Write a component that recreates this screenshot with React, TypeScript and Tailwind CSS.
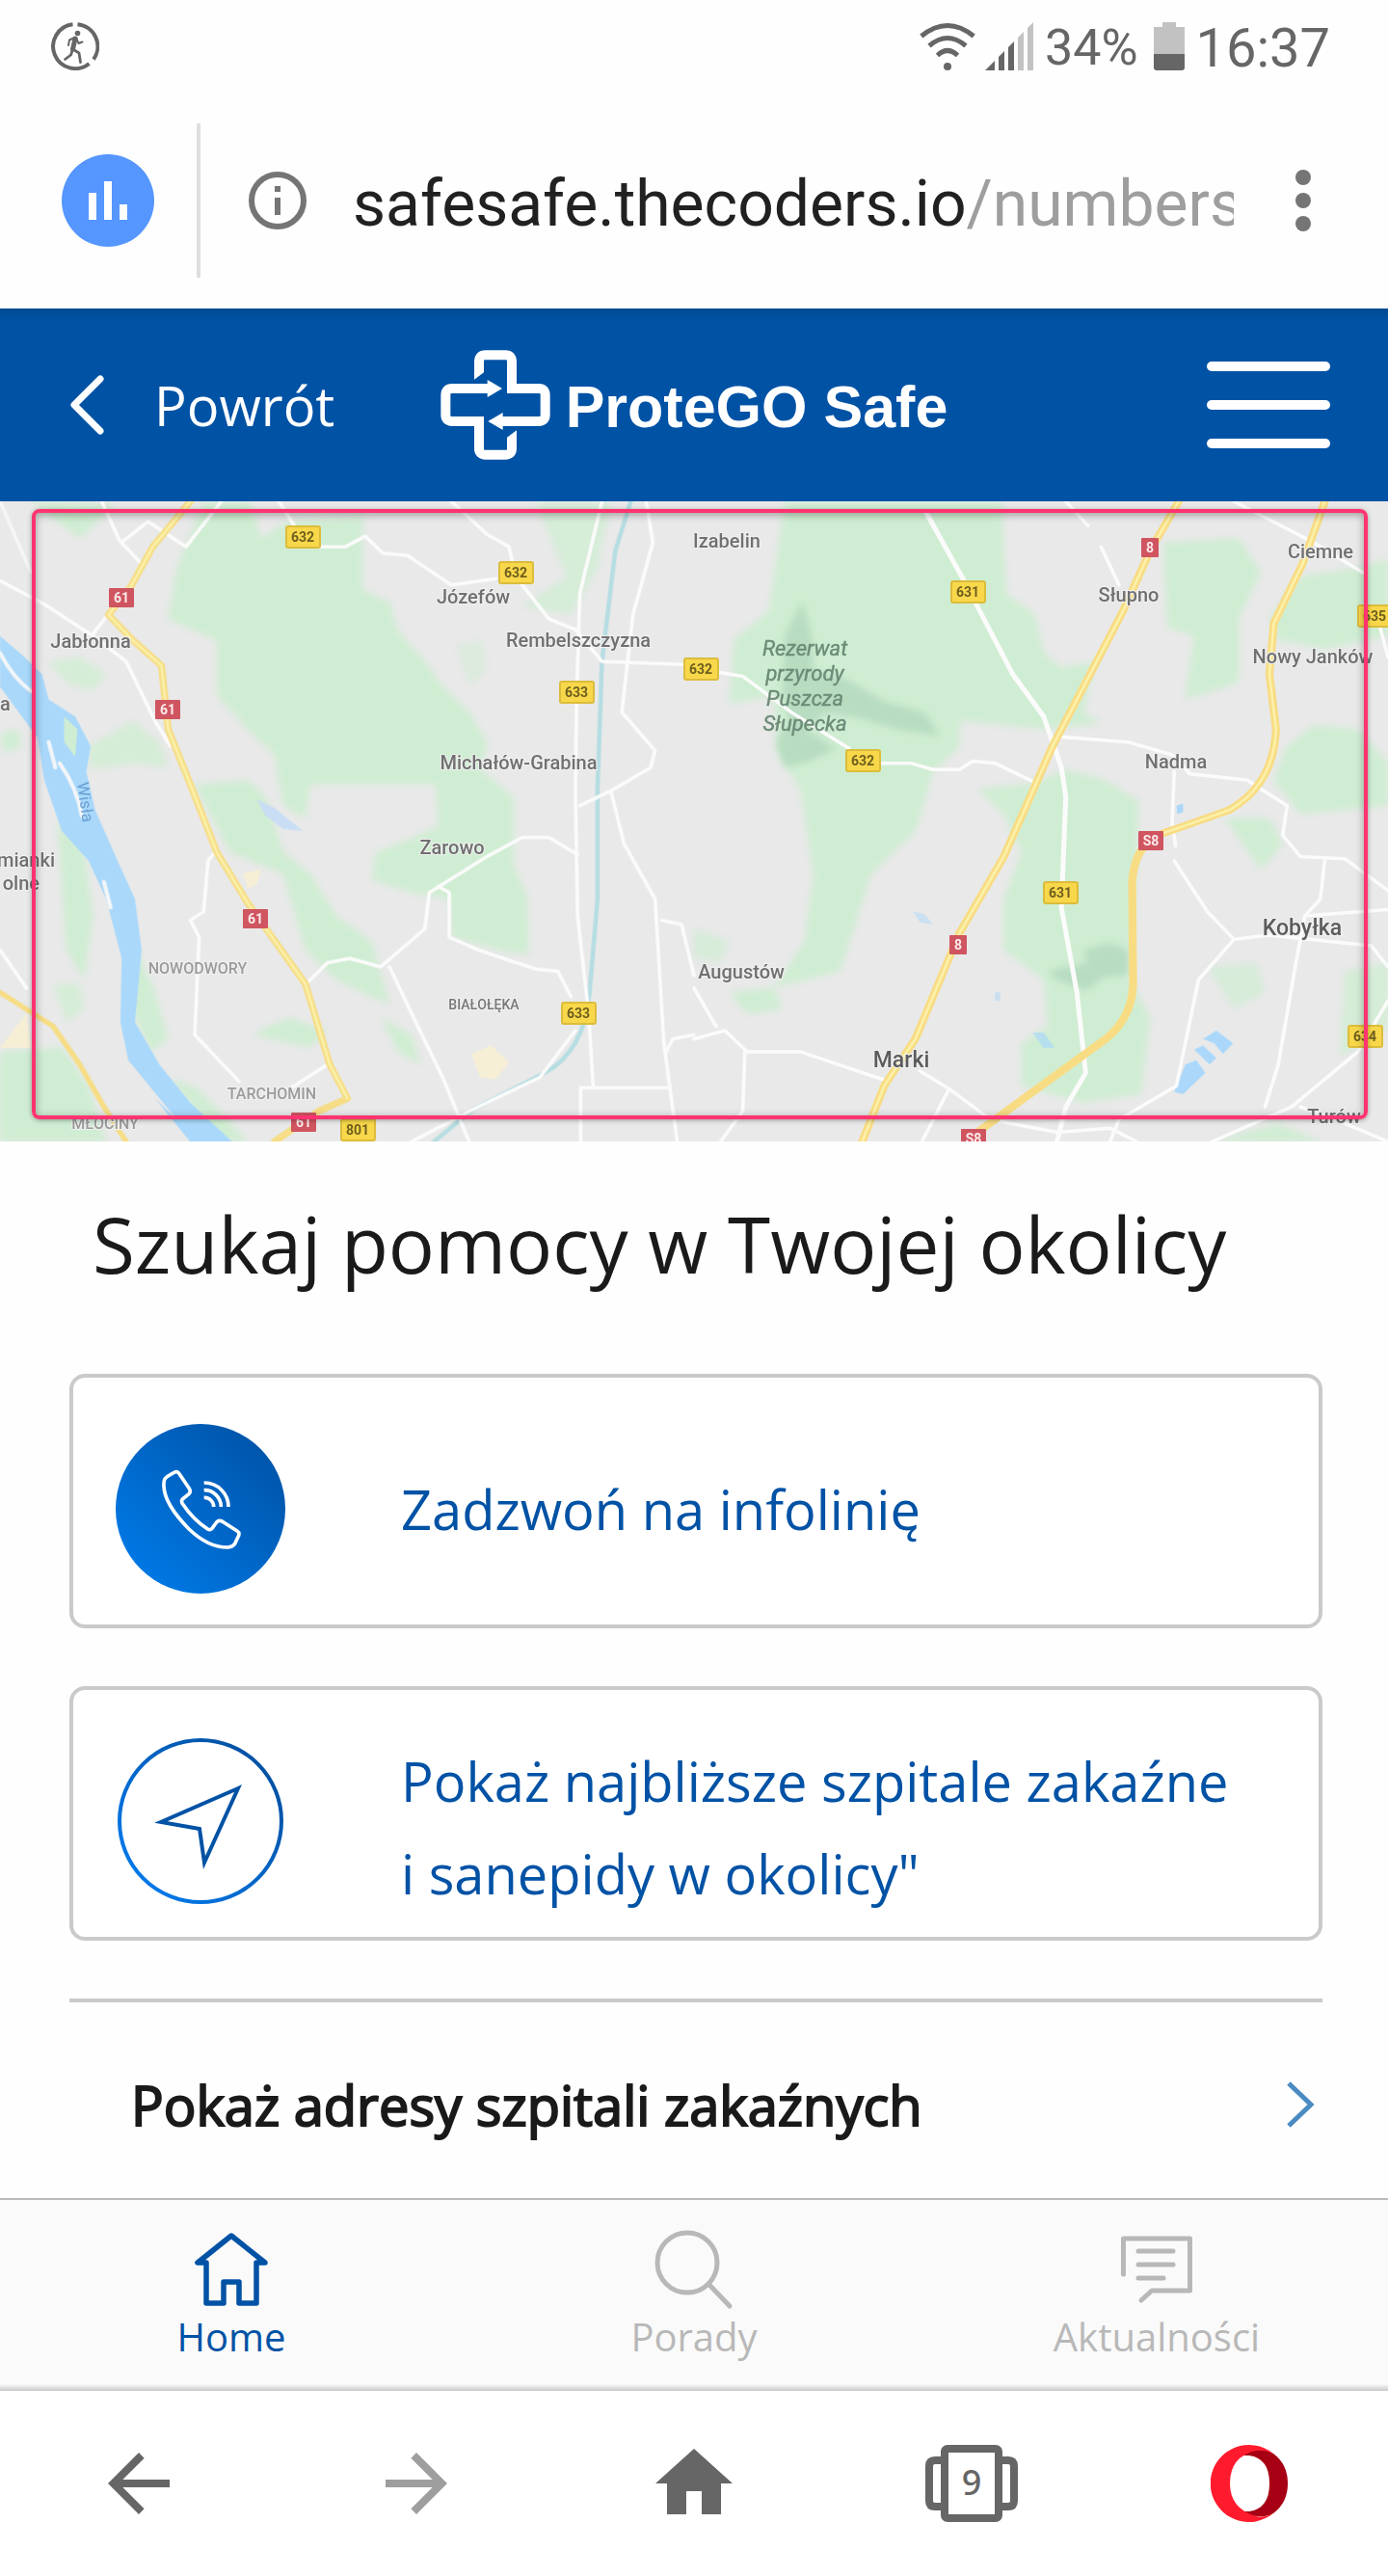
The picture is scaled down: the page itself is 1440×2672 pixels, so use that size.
import type { ReactNode } from "react";

type Point = { text: string; x: number; y: number; size?: number; tone?: string; anchor?: "start" | "middle" | "end" };

const TOWN = "#707070";
const DISTRICT = "#9b9b9b";
const RESERVE = "#6d8c78";

const labels: Point[] = [
  { text: "a", x: 0, y: 217, anchor: "start" },
  { text: "Jabłonna", x: 94, y: 152 },
  { text: "Józefów", x: 491, y: 106 },
  { text: "Rembelszczyzna", x: 600, y: 151 },
  { text: "Michałów-Grabina", x: 538, y: 278 },
  { text: "Zarowo", x: 469, y: 366 },
  { text: "mianki", x: 57, y: 379, anchor: "end" },
  { text: "olne", x: 41, y: 403, anchor: "end" },
  { text: "NOWODWORY", x: 205, y: 490, size: 16, tone: DISTRICT },
  { text: "BIAŁOŁĘKA", x: 502, y: 527, size: 14, tone: "#777777" },
  { text: "TARCHOMIN", x: 282, y: 620, size: 16, tone: DISTRICT },
  { text: "MŁOCINY", x: 109, y: 651, size: 16, tone: DISTRICT },
  { text: "Izabelin", x: 754, y: 48 },
  { text: "Słupno", x: 1171, y: 104 },
  { text: "Ciemne", x: 1370, y: 59 },
  { text: "Nowy Janków", x: 1362, y: 168 },
  { text: "Nadma", x: 1220, y: 277 },
  { text: "Augustów", x: 769, y: 495 },
  { text: "Kobyłka", x: 1351, y: 450, size: 23, tone: "#5c5c5c" },
  { text: "Marki", x: 935, y: 587, size: 23, tone: "#5c5c5c" },
  { text: "Turów", x: 1384, y: 645 },
];

const reserve = [
  { text: "Rezerwat", y: 160 },
  { text: "przyrody", y: 186 },
  { text: "Puszcza", y: 212 },
  { text: "Słupecka", y: 238 },
];

const regionalRoads: [string, number, number][] = [
  ["632", 314, 37],
  ["632", 535, 74],
  ["633", 598, 198],
  ["633", 600, 531],
  ["801", 371, 652],
  ["632", 727, 174],
  ["631", 1004, 94],
  ["632", 895, 269],
  ["631", 1100, 406],
  ["635", 1426, 119],
  ["634", 1416, 555],
];

const nationalRoads: [string, number, number, number][] = [
  ["61", 126, 100, 26],
  ["61", 174, 216, 26],
  ["61", 265, 433, 26],
  ["61", 315, 644, 26],
  ["8", 1193, 48, 18],
  ["8", 994, 460, 18],
  ["S8", 1194, 352, 26],
  ["S8", 1010, 661, 26],
];

function MapArtwork() {
  return (
    <svg
      className="block h-full w-full"
      viewBox="0 0 1440 664"
      preserveAspectRatio="xMidYMid slice"
      fontFamily="Roboto, sans-serif"
      role="img"
      aria-label="Mapa okolicy"
    >
      <defs>
        <filter id="soft" x="-5%" y="-5%" width="110%" height="110%">
          <feGaussianBlur stdDeviation="8" />
        </filter>
      </defs>
      <rect width="1440" height="664" fill="#e9e9e9" />

      {/* western half */}
      <g transform="translate(0 -10) scale(.4592 .4401)" fill="none" strokeLinecap="round" strokeLinejoin="round">
        <g fill="#cfedd2" filter="url(#soft)">
          <path d="M460 23H565L590 110L650 70L820 60L818 230L880 262L900 330L960 400L1000 460L1060 520L1100 590L1090 660L1160 720L1160 880L1190 950L1195 1090L1150 1085L1020 1050L1015 960L930 945L840 915L850 850L900 830L990 790L985 690L800 690L700 690L690 770L640 740L620 620L560 560L490 480L490 350L380 300L400 180Z" />
          <path d="M70 23L260 30L180 110Z" />
          <path d="M110 400L180 390L240 430L210 470L150 450Z" opacity=".8" />
          <path d="M200 600L300 540L360 590L380 650L300 640L240 650L200 650Z" opacity=".8" />
          <path d="M440 690L560 680L600 720L640 850L700 900L760 1000L840 1060L880 1210L760 1150L690 1080L640 900L520 850Z" />
          <path d="M130 770L190 850L210 1000L190 1150L150 1080Z" />
          <path d="M300 1060L350 1180L380 1290L340 1320L290 1200Z" />
          <path d="M120 1160H180L190 1220L150 1250Z" opacity=".8" />
          <path d="M0 1320L140 1310L200 1400L240 1532H0Z" />
          <path d="M380 1380L450 1410L560 1532H500Z" />
          <path d="M570 1280L650 1240L740 1270L700 1310Z" />
          <path d="M860 1240L930 1280L950 1350L900 1320Z" />
          <path d="M1210 23H1380L1350 180L1290 290L1180 270L1280 200Z" opacity=".75" />
          <path d="M1030 360L1090 350L1100 420L1060 460Z" opacity=".5" />
          <path d="M0 570L40 560L50 600L10 615Z" />
        </g>
        <g fill="#f7efd5">
          <path d="M1065 1325L1110 1305L1150 1345L1120 1385L1085 1380Z" />
          <path d="M550 900L590 890L580 925L560 935Z" />
          <path d="M0 1310L60 1230L70 1310Z" />
        </g>
        <path d="M0 340L50 385L95 430L110 490L170 530L205 600L195 660L215 750L270 880L305 960L320 1080L305 1250L360 1350L430 1440L525 1532H430L350 1430L400 1480L290 1340L272 1250L275 1100L240 960L200 870L140 800L100 680L85 580L0 460Z" fill="#a9d8fb" />
        <path d="M145 530L175 560L170 625L145 590Z" fill="#cfedd2" />
        <path d="M0 380Q30 440 70 470M110 590L125 650M135 640Q175 700 185 765M235 920L250 980" stroke="#f3f6f8" strokeWidth="9" />
        <path d="M580 725L620 745L685 800L640 795L600 765Z" fill="#c9def5" />
        <path d="M1425 23L1390 140L1360 400L1350 700L1350 960L1332 1180Q1320 1320 1230 1370L1070 1455L980 1532" stroke="#b5dde2" strokeWidth="10" />
        <g stroke="#fbfbfb" strokeWidth="8">
          <path d="M0 210L100 265L210 340L285 400L350 540L385 600" />
          <path d="M240 295L210 335" />
          <path d="M230 23L270 115L320 170M280 115L335 70L420 130L500 23" />
          <path d="M0 23L70 190" opacity=".7" />
          <path d="M630 23L665 80M720 130L780 130L825 105L865 145L920 150L1020 220L1120 205" />
          <path d="M1020 23L1100 100L1150 130L1165 200L1240 300L1300 325L1360 400L1568 408" />
          <path d="M1360 23L1310 240L1303 480L1300 700L1305 1000L1330 1230L1340 1400M1312 1532V1405H1515" />
          <path d="M1460 23L1475 120L1430 290L1405 520L1480 610L1470 650L1380 705L1310 740M1380 705L1410 830L1480 960L1500 1300L1530 1532M1495 1010L1540 1020L1568 1140M1505 1320L1520 1290L1568 1280" />
          <path d="M485 850L470 870L460 990L430 1010L450 1050L440 1280L540 1390M650 1410L740 1350" />
          <path d="M690 1162L740 1110L790 1100L860 1120L960 1030L970 945L1100 860L1180 815L1240 815L1305 855M990 930L1015 945V1050L1080 1080L1210 1125L1260 1130L1290 1190" />
          <path d="M880 1120L930 1230L1000 1380L1060 1532M930 1532L1080 1450L1220 1380L1300 1270" />
          <path d="M0 1080L60 1170" />
        </g>
        <g stroke="#f6dd86" strokeWidth="16">
          <path d="M430 23L345 130L295 225L245 290L300 350L365 410L380 560L430 690L490 850L560 970L690 1160L745 1350L785 1430L720 1460L620 1532" />
          <path d="M0 1180L120 1260L180 1350L235 1450L285 1532" strokeWidth="12" />
        </g>
        <path d="M430 23L345 130L295 225L245 290L300 350L365 410L380 560L430 690L490 850L560 970L690 1160L745 1350L785 1430" stroke="#fbf0a8" strokeWidth="6" />
      </g>

      {/* eastern half */}
      <g transform="translate(720 -10) scale(.4592 .4401)" fill="none" strokeLinecap="round" strokeLinejoin="round">
        <g fill="#cfedd2" filter="url(#soft)">
          <path d="M205 23H695L705 240L770 290L790 380L830 415L905 400L880 520L920 545L800 560L600 540L600 600L540 660L500 800L400 900L370 1000L330 1130L180 1170L250 1060L270 900L240 700L190 620L180 480L80 500L90 350L170 280Z" />
          <path d="M840 655L930 680L1005 730L1000 870L985 1150L1030 1240L1010 1420L880 1440L740 1400L740 1300L800 1260L790 1150L700 1080L700 960L740 850L700 760L640 700L760 690Z" />
          <path d="M1060 120L1230 110L1280 190L1230 300L1230 450L1110 490L1130 340L1070 320Z" />
          <path d="M1370 200L1500 180L1568 160V340L1430 370L1320 350L1300 300Z" />
          <path d="M1400 550L1500 560L1568 640V740L1370 760L1310 680L1340 600Z" />
          <path d="M1200 770L1300 770L1330 830L1280 890Z" />
          <path d="M1160 1120L1270 1110L1290 1180L1220 1220Z" opacity=".7" />
          <path d="M1470 1130L1568 1110V1260L1460 1330Z" opacity=".8" />
          <path d="M1170 1532L1320 1490L1420 1532Z" />
          <path d="M80 1180L180 1170L200 1220L120 1230Z" />
          <path d="M0 1030L80 1060L60 1110L0 1100Z" opacity=".7" />
        </g>
        <g fill="#b7dcc0" filter="url(#soft)">
          <path d="M245 260L265 340L270 420L340 440L430 495L520 520L555 575L460 560L380 535L300 520L250 560L320 605L260 635L205 650L185 590L215 540L200 470L205 340Z" />
          <path d="M800 1130L890 1110L880 1080L940 1065L980 1080L980 1140L920 1145L890 1175L820 1150Z" />
        </g>
        <g fill="#abd8fa">
          <path d="M1150 1290L1180 1270L1218 1300L1195 1325L1175 1300ZM1130 1315L1150 1305L1180 1335L1165 1350ZM1110 1350L1135 1340L1155 1370L1105 1420L1085 1415Z" />
          <path d="M765 1275H790L815 1310L790 1312Z" opacity=".7" />
          <path d="M1090 740L1105 735L1105 755L1092 760Z" />
          <path d="M495 990L520 995L540 1020L510 1015Z" opacity=".5" />
          <path d="M680 1180H692V1200H680Z" opacity=".5" />
        </g>
        <g stroke="#fbfbfb" strokeWidth="8">
          <path d="M525 50L610 210L720 430L790 530L830 650L840 720L830 980L865 1180L885 1370L840 1450L820 1532" strokeWidth="11" />
          <path d="M50 425L110 435L220 520L350 605M425 640H490L540 655L600 655L630 635L680 640L770 685" />
          <path d="M830 578L980 590L1080 620L1120 665L1250 680L1340 740L1330 810L1370 860L1470 865L1568 940" />
          <path d="M1085 660L1080 780L1088 835M1085 870L1160 990L1220 1055L1300 1045L1530 1070L1568 1120M1220 1055L1140 1150L1090 1400L960 1480L940 1532" />
          <path d="M1425 870L1415 960L1380 1000L1360 1110L1320 1350L1290 1450M1380 1000L1568 985" />
          <path d="M1220 23L1400 120L1510 190M1550 320L1568 390M920 130L960 220M840 23L890 80" />
          <path d="M0 1290L70 1270L120 1320H240L440 1390M115 1320L110 1460L60 1532M0 1170L50 1260" />
          <path d="M510 1365L580 1410L670 1480L820 1510L940 1500L1000 1532M575 1410L515 1532" />
          <path d="M1170 1532L1350 1450L1500 1320L1568 1200M1370 1450L1450 1480L1568 1532" />
        </g>
        <g stroke="#f8dc84" strokeWidth="18">
          <path d="M1095 23L1030 140L970 280L810 600L700 860L600 1040L500 1290L430 1400L380 1532" />
          <path d="M1425 23L1375 170L1310 310L1300 430L1315 560Q1310 690 1210 750Q1130 780 1060 805Q995 830 990 920L992 1160Q990 1240 930 1290L640 1510" />
        </g>
        <g stroke="#fbf0a8" strokeWidth="6">
          <path d="M1095 23L1030 140L970 280L810 600L700 860L600 1040L500 1290L430 1400L380 1532" />
          <path d="M1425 23L1375 170L1310 310L1300 430L1315 560Q1310 690 1210 750Q1130 780 1060 805" />
        </g>
      </g>

      {regionalRoads.map(([code, x, y]) => (
        <g key={`${code}-${x}`}>
          <rect x={x - 17} y={y - 11} width="35" height="22" rx="2" fill="#f8d84a" stroke="#dcbc3c" strokeWidth="2" />
          <text x={x} y={y + 5} textAnchor="middle" fontSize="14" fontWeight="700" fill="#6f5f1e">
            {code}
          </text>
        </g>
      ))}
      {nationalRoads.map(([code, x, y, w]) => (
        <g key={`${code}-${x}`}>
          <rect x={x - w / 2} y={y - 10} width={w} height="20" rx="1" fill="#cf5560" />
          <text x={x} y={y + 5} textAnchor="middle" fontSize="14" fontWeight="700" fill="#fbeaea">
            {code}
          </text>
        </g>
      ))}
      {labels.map((l) => (
        <text
          key={l.text}
          x={l.x}
          y={l.y}
          textAnchor={l.anchor ?? "middle"}
          fontSize={l.size ?? 20}
          fontWeight="500"
          fill={l.tone ?? TOWN}
          stroke="#f1f1f1"
          strokeWidth="2"
          paintOrder="stroke"
        >
          {l.text}
        </text>
      ))}
      {reserve.map((l) => (
        <text key={l.text} x="835" y={l.y} textAnchor="middle" fontSize="22" fontStyle="italic" fill={RESERVE} stroke={RESERVE} strokeWidth=".4">
          {l.text}
        </text>
      ))}
      <text transform="translate(80 292) rotate(82)" fontSize="17" fill="#6ba0d4">
        Wisła
      </text>
    </svg>
  );
}

function RunnerIcon() {
  return (
    <svg className="h-[50px] w-[50px]" viewBox="0 0 50 50" fill="none" stroke="#666666" aria-hidden="true">
      <path d="M22.500 2.200A23 23 0 1 0 39.500 43" strokeWidth="4" />
      <path d="M27.500 2.200A23 23 0 0 1 44 38.500" strokeWidth="4" />
      <circle cx="27.500" cy="11.500" r="2.800" fill="#666666" stroke="none" />
      <path d="M25 17L22.500 28" strokeWidth="5" strokeLinecap="round" strokeLinejoin="round" />
      <path d="M24.500 16L19 18.500L18 24M26.500 17L28.500 22L32.500 20.500" strokeWidth="2" strokeLinecap="round" strokeLinejoin="round" />
      <path d="M22.500 28L29 32L30.500 41.500M22.500 28L20.500 34L14.500 38.500" strokeWidth="2.800" strokeLinecap="round" strokeLinejoin="round" />
    </svg>
  );
}

function WifiIcon() {
  return (
    <svg className="h-[50px] w-[58px]" viewBox="0 0 58 50" fill="none" stroke="#666666" strokeWidth="5" aria-hidden="true">
      <path d="M1.800 14.500Q29 -7.500 56.200 14.500" />
      <path d="M10 24.500Q29 8.500 48 24.500" />
      <path d="M18.500 34.500Q29 24.500 39.500 34.500" />
      <circle cx="29" cy="46" r="4" fill="#666666" stroke="none" />
    </svg>
  );
}

function SignalIcon() {
  return (
    <svg className="h-[50px] w-[50px]" viewBox="0 0 50 50" aria-hidden="true">
      <path d="M0 50L10 40V50ZM14 36L20 30V50H14ZM24 26L30 20V50H24Z" fill="#666666" />
      <path d="M34 16L40 10V50H34ZM44 6L50 0V50H44Z" fill="#c2c2c2" />
    </svg>
  );
}

function BatteryIcon() {
  return (
    <svg className="h-[50px] w-8" viewBox="0 0 32 50" aria-hidden="true">
      <path d="M9 0H23V5H32V33H0V5H9Z" fill="#c2c2c2" />
      <path d="M0 33H32V47Q32 50 29 50H3Q0 50 0 47Z" fill="#666666" />
    </svg>
  );
}

function ProteGoMark() {
  return (
    <svg className="h-[114px] w-[114px]" viewBox="49 38 342 342" aria-hidden="true">
      <g fill="none" stroke="#ffffff" strokeWidth="30">
        <path d="M169 105V74Q169 54 189 54H251Q271 54 271 74V158H355Q375 158 375 178V240Q375 260 355 260H240" />
        <path d="M271 313V344Q271 364 251 364H189Q169 364 169 344V260H85Q65 260 65 240V178Q65 158 85 158H198" />
      </g>
      <path d="M154 104V130L184 108V104ZM286 314V288L256 310V314ZM195 131L241 158L195 185ZM243 233L197 260L243 287Z" fill="#ffffff" />
    </svg>
  );
}

function PhoneIcon() {
  return (
    <svg className="h-44 w-44 shrink-0" viewBox="0 0 528 528" fill="none" aria-hidden="true">
      <defs>
        <linearGradient id="call" x1="0.150" y1="0.850" x2="0.850" y2="0.150">
          <stop offset="0" stopColor="#0077e3" />
          <stop offset="1" stopColor="#0056ac" />
        </linearGradient>
      </defs>
      <circle cx="264" cy="264" r="264" fill="url(#call)" />
      <g stroke="#ffffff" strokeWidth="11" strokeLinejoin="round">
        <path d="M184 150Q193 147 198 155L229 201Q235 211 228 218L208 234Q203 240 208 248Q240 296 285 326Q294 332 300 325L314 306Q321 298 331 303L378 333Q386 338 383 347L371 373Q364 382 350 384Q290 386 228 327Q152 250 150 194Q149 179 153 171Q159 163 170 158Z" />
        <path d="M275 183A75 75 0 0 1 351 258" />
        <path d="M275 206A52 52 0 0 1 328 258" />
        <path d="M275 229A29 29 0 0 1 305 258" />
      </g>
    </svg>
  );
}

function LocationIcon() {
  return (
    <svg className="h-44 w-44 shrink-0" viewBox="0 0 176 176" fill="none" aria-hidden="true">
      <defs>
        <linearGradient id="ring" x1="0.150" y1="0.850" x2="0.850" y2="0.150">
          <stop offset="0" stopColor="#0077e6" />
          <stop offset="1" stopColor="#0052a5" />
        </linearGradient>
      </defs>
      <circle cx="88" cy="88" r="84" stroke="url(#ring)" strokeWidth="4" />
      <path d="M127 54L47 89L87 96L92 131Z" stroke="#0052a5" strokeWidth="4" />
    </svg>
  );
}

function ActionCard({ icon, children }: { icon: ReactNode; children: ReactNode }) {
  return (
    <button
      type="button"
      className="flex h-[264px] w-full items-center gap-[120px] rounded-2xl border-4 border-[#cacaca] bg-white pt-4 pl-11 text-left text-[56px] leading-[96px] text-[#0052a5]"
    >
      {icon}
      {children}
    </button>
  );
}

function Tab({ icon, label, active }: { icon: ReactNode; label: string; active?: boolean }) {
  return (
    <a
      href="#"
      aria-current={active ? "page" : undefined}
      className={`flex flex-1 flex-col items-center pt-[30px] text-[40px] leading-[52px] ${active ? "text-[#0052a5]" : "text-[#b8b8b8]"}`}
    >
      {icon}
      {label}
    </a>
  );
}

export default function App() {
  return (
    <div className="flex w-full flex-col bg-[#fefefe] font-['Open_Sans','Noto_Sans',sans-serif] text-[#1a1a1a]">
      <div className="flex h-24 items-center justify-between pr-[60px] pl-[53px] font-[Roboto,sans-serif] text-[#666666]">
        <RunnerIcon />
        <div className="flex items-center">
          <WifiIcon />
          <div className="ml-[10px] flex">
            <SignalIcon />
          </div>
          <span className="ml-3 pt-1 text-[52px] leading-[60px]">34%</span>
          <div className="ml-4 flex">
            <BatteryIcon />
          </div>
          <span className="ml-3 pt-1 text-[56px] leading-[60px]">16:37</span>
        </div>
      </div>

      <div className="flex h-56 items-center pr-20 pl-16 font-[Roboto,sans-serif]">
        <button type="button" aria-label="Statystyki" className="shrink-0">
          <svg className="h-24 w-24" viewBox="0 0 96 96" aria-hidden="true">
            <circle cx="48" cy="48" r="48" fill="#5596ff" />
            <path d="M28 40H36V68H28ZM44 28H52V68H44ZM60 52H68V68H60Z" fill="#ffffff" />
          </svg>
        </button>
        <div className="ml-11 h-40 w-1 shrink-0 bg-[#dedede]" />
        <button type="button" aria-label="Informacje o stronie" className="ml-[50px] shrink-0">
          <svg className="h-[60px] w-[60px]" viewBox="0 0 60 60" aria-hidden="true">
            <circle cx="30" cy="30" r="27" fill="none" stroke="#757575" strokeWidth="6" />
            <path d="M27 15H33V21H27ZM27 27H33V45H27Z" fill="#757575" />
          </svg>
        </button>
        <div className="ml-12 min-w-0 flex-1 overflow-hidden pt-2 text-[66px] leading-20 whitespace-nowrap text-[#212121]">
          safesafe.thecoders.io<span className="text-[#9e9e9e]">/numbers</span>
        </div>
        <button type="button" aria-label="Menu przeglądarki" className="ml-16 flex shrink-0 flex-col gap-2">
          <span className="h-4 w-4 rounded-full bg-[#757575]" />
          <span className="h-4 w-4 rounded-full bg-[#757575]" />
          <span className="h-4 w-4 rounded-full bg-[#757575]" />
        </button>
      </div>

      <header className="grid h-[200px] grid-cols-[1fr_auto_1fr] items-center bg-[#0052a5] bg-linear-to-b from-[#004a92] to-[#0052a5] to-[12px] px-[60px] text-white">
        <button type="button" className="flex items-center gap-[52px] pl-3 text-[56px] leading-[80px]">
          <svg className="h-16 w-9" viewBox="0 0 36 64" fill="none" stroke="#ffffff" strokeWidth="7" strokeLinecap="round" strokeLinejoin="round" aria-hidden="true">
            <path d="M32 5L5 32L32 59" />
          </svg>
          Powrót
        </button>
        <a href="#" className="flex items-center gap-4 font-['Liberation_Sans',Arial,sans-serif] text-[61px] leading-[72px] font-bold">
          <ProteGoMark />
          <span className="pt-1">ProteGO Safe</span>
        </a>
        <button type="button" aria-label="Menu" className="flex w-32 flex-col gap-[30px] justify-self-end">
          <span className="h-[10px] w-full rounded-full bg-white" />
          <span className="h-[10px] w-full rounded-full bg-white" />
          <span className="h-[10px] w-full rounded-full bg-white" />
        </button>
      </header>

      <div className="relative h-[664px] overflow-hidden">
        <MapArtwork />
        <div className="absolute top-2 right-[21px] bottom-[23px] left-[33px] rounded-lg border-4 border-[#ff3370] shadow-[0_1px_5px_rgba(0,0,0,0.35),inset_0_2px_8px_rgba(0,0,0,0.35)]" />
      </div>

      <main className="flex flex-col pr-[68px] pl-[72px]">
        <h1 className="pt-[58px] pl-6 text-[80px] leading-[96px]">Szukaj pomocy w Twojej okolicy</h1>
        <div className="mt-[87px] flex flex-col gap-[60px]">
          <ActionCard icon={<PhoneIcon />}>
            <span>Zadzwoń na infolinię</span>
          </ActionCard>
          <ActionCard icon={<LocationIcon />}>
            <span className="pt-3">
              Pokaż najbliższe szpitale zakaźne
              <br />i sanepidy w okolicy"
            </span>
          </ActionCard>
        </div>
        <div className="mt-[60px] border-t-4 border-[#cacaca]">
          <button type="button" className="flex h-[203px] w-full items-center justify-between pt-2 pr-2 pl-16 text-left text-[56px] leading-[80px]">
            <span className="[-webkit-text-stroke:2px_#1a1a1a]">Pokaż adresy szpitali zakaźnych</span>
            <svg className="h-12 w-[30px]" viewBox="0 0 30 48" fill="none" stroke="#4a8bc2" strokeWidth="5" aria-hidden="true">
              <path d="M3 2L26 24L3 46" />
            </svg>
          </button>
        </div>
      </main>

      <nav aria-label="Aplikacja" className="flex h-[200px] border-t-2 border-[#bababa] bg-[#fafafa] bg-linear-to-t from-[#c8c8c8] to-[#fafafa] to-[7px]">
        <Tab
          active
          label="Home"
          icon={
            <svg className="h-[86px] w-[86px]" viewBox="0 0 86 86" fill="none" stroke="currentColor" strokeWidth="5.500" strokeLinecap="round" strokeLinejoin="round" aria-hidden="true">
              <path d="M43 7L8 35H17V77H35V55H51V77H69V35H78Z" />
            </svg>
          }
        />
        <Tab
          label="Porady"
          icon={
            <svg className="h-[86px] w-[86px]" viewBox="0 0 86 86" fill="none" stroke="currentColor" strokeWidth="5" strokeLinecap="round" aria-hidden="true">
              <circle cx="36" cy="35" r="31" />
              <path d="M58 57L80 80" />
            </svg>
          }
        />
        <Tab
          label="Aktualności"
          icon={
            <svg className="h-[86px] w-[86px]" viewBox="0 0 86 86" fill="none" stroke="currentColor" strokeWidth="5" strokeLinecap="round" strokeLinejoin="round" aria-hidden="true">
              <path d="M8.500 47V10H77.500V64H38L27 74" />
              <path d="M24 23H60M24 37H60M24 51H50" />
            </svg>
          }
        />
      </nav>

      <nav aria-label="Przeglądarka" className="flex h-48 items-center bg-white text-[#666666]">
        <button type="button" aria-label="Wstecz" className="flex flex-1 justify-center">
          <svg className="h-24 w-24" viewBox="0 0 24 24" fill="#666666" aria-hidden="true">
            <path d="M20 11H7.830l5.590-5.590L12 4l-8 8 8 8 1.410-1.410L7.830 13H20v-2z" />
          </svg>
        </button>
        <button type="button" aria-label="Dalej" className="flex flex-1 justify-center">
          <svg className="h-24 w-24" viewBox="0 0 24 24" fill="#9e9e9e" aria-hidden="true">
            <path d="M12 4l-1.410 1.410L16.170 11H4v2h12.170l-5.580 5.590L12 20l8-8z" />
          </svg>
        </button>
        <button type="button" aria-label="Strona startowa" className="flex flex-1 justify-center">
          <svg className="h-24 w-24" viewBox="0 0 24 24" fill="#666666" aria-hidden="true">
            <path d="M10 20v-6h4v6h5v-8h3L12 3 2 12h3v8z" />
          </svg>
        </button>
        <button type="button" aria-label="Karty: 9" className="flex flex-1 justify-center">
          <svg className="h-24 w-24" viewBox="0 0 96 96" fill="none" stroke="#666666" strokeWidth="8" aria-hidden="true">
            <path d="M20 24H10Q4 24 4 30V66Q4 72 10 72H20M76 24H86Q92 24 92 30V66Q92 72 86 72H76" />
            <rect x="20" y="12" width="56" height="72" rx="3" />
            <text x="48" y="60" textAnchor="middle" fontFamily="Noto Sans, sans-serif" fontSize="36" fontWeight="500" fill="#666666" stroke="none">
              9
            </text>
          </svg>
        </button>
        <button type="button" aria-label="Opera" className="flex flex-1 justify-center">
          <svg className="h-20 w-20" viewBox="0 0 80 80" aria-hidden="true">
            <path d="M33 11Q40 5 49 5Q58 5 65 9Q80 20 80 40Q80 60 65 71Q58 75 49 74Q40 74 33 69L40 69Q61 66 61 40Q61 14 40 11Z" fill="#a70014" />
            <path d="M40 0A40 40 0 1 0 65 71Q56 76 47 74Q20 66 20 40Q20 12 47 6Q56 4 65 9A40 40 0 0 0 40 0Z" fill="#ff1b2d" />
          </svg>
        </button>
      </nav>
    </div>
  );
}
